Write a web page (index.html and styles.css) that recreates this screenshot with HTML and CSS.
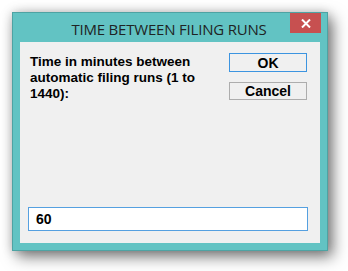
FILE: index.html
```html
<!DOCTYPE html>
<html>
<head>
<meta charset="utf-8">
<link rel="stylesheet" href="styles.css">
</head>
<body>
<div class="window">
  <div class="titlebar">
    <span class="title">TIME BETWEEN FILING RUNS</span>
    <button class="close" aria-label="Close">
      <svg width="10" height="9" viewBox="0 0 10 9"><path d="M1 0.5 L9 8.5 M9 0.5 L1 8.5" stroke="#fff" stroke-width="2"/></svg>
    </button>
  </div>
  <div class="client">
    <div class="top">
      <p class="prompt">Time in minutes between automatic filing runs (1 to 1440):</p>
      <div class="buttons">
        <button class="btn btn-default">OK</button>
        <button class="btn">Cancel</button>
      </div>
    </div>
    <div class="field">60</div>
  </div>
</div>
</body>
</html>
```
FILE: styles.css
```css
html, body {
  margin: 0;
  padding: 0;
  background: #ffffff;
}
body {
  padding: 12px 0 0 12px;
  width: 348px;
  height: 271px;
  box-sizing: border-box;
  overflow: hidden;
}
.window {
  width: 316px;
  height: 239px;
  box-sizing: border-box;
  background: #62c3c3;
  border: 1px solid #4ea3a3;
  box-shadow: 5px 6px 14px rgba(0,0,0,0.5), 0 0 10px rgba(0,0,0,0.18);
  display: flex;
  flex-direction: column;
}
.titlebar {
  height: 29px;
  display: flex;
  position: relative;
  justify-content: center;
  align-items: flex-start;
}
.title {
  font-family: "Open Sans", "Noto Sans", sans-serif;
  font-size: 15px;
  color: #1f2424;
  margin-top: 6px;
  margin-left: -2px;
  letter-spacing: -0.2px;
}
.close {
  position: absolute;
  right: 6px;
  top: 0;
  width: 31px;
  height: 20px;
  border: 0;
  padding: 0;
  background: #c75050;
  display: flex;
  align-items: center;
  justify-content: center;
}
.client {
  flex: 1;
  margin: 0 7px 7px 7px;
  background: #f0f0f0;
  display: flex;
  flex-direction: column;
  justify-content: space-between;
  padding: 11px 12px 12px 8px;
}
.top {
  display: flex;
  justify-content: space-between;
  align-items: flex-start;
}
.prompt {
  margin: 1px 0 0 2px;
  width: 190px;
  font-family: "Liberation Sans", Arial, sans-serif;
  font-weight: bold;
  font-size: 13.5px;
  line-height: 16px;
  color: #000;
}
.buttons {
  display: flex;
  flex-direction: column;
  gap: 10px;
  margin-right: 1px;
}
.btn {
  width: 78px;
  height: 18px;
  box-sizing: border-box;
  background: #f0f0f0;
  border: 1px solid #adadad;
  font-family: "Liberation Sans", Arial, sans-serif;
  font-weight: bold;
  font-size: 14px;
  line-height: 14px;
  color: #000;
  padding: 0;
}
.btn-default {
  height: 19px;
  border-color: #3c94e0;
}
.field {
  height: 24px;
  box-sizing: border-box;
  background: #fff;
  border: 1px solid #55a0e0;
  font-family: "Liberation Sans", Arial, sans-serif;
  font-weight: bold;
  font-size: 14px;
  line-height: 20px;
  padding: 1px 7px;
  color: #000;
}
```
